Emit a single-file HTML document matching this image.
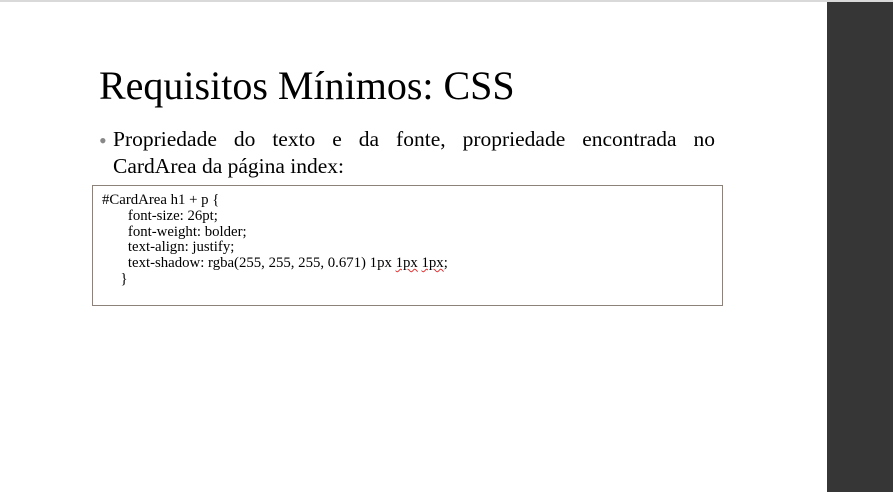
<!DOCTYPE html>
<html><head><meta charset="utf-8"><style>
body{margin:0;width:893px;height:492px;background:#fff;position:relative;overflow:hidden;font-family:"Liberation Serif",serif;color:#000}
.top{position:absolute;left:0;top:0;width:893px;height:2px;background:#d9d9d9}
.side{position:absolute;left:827px;top:2px;width:66px;height:490px;background:#363636}
h1{position:absolute;left:99px;top:62px;margin:0;font-weight:normal;font-size:40px;line-height:48px;white-space:nowrap}
.b{position:absolute;left:99px;top:127px;font-size:22px;color:#888;line-height:27px}
.p{position:absolute;left:113px;top:126px;width:602px;font-size:21.5px;line-height:27px}
.j{text-align:justify;text-align-last:justify;white-space:nowrap}
.code{position:absolute;left:92px;top:185px;width:629px;height:119px;border:1px solid #8c8279;font-size:14.8px;line-height:15.8px}
.ln{white-space:pre}
.u{text-decoration:underline wavy #d33;text-decoration-thickness:1px}
</style></head><body>
<div class="top"></div><div class="side"></div>
<h1>Requisitos Mínimos: CSS</h1>
<div class="b">•</div>
<div class="p"><div class="j" style="white-space:normal">Propriedade do texto e da fonte, propriedade encontrada no</div><div>CardArea da página index:</div></div>
<div class="code"><div style="padding:7px 0 0 9px"><div class="ln">#CardArea h1 + p {</div><div class="ln">       font-size: 26pt;</div><div class="ln">       font-weight: bolder;</div><div class="ln">       text-align: justify;</div><div class="ln">       text-shadow: rgba(255, 255, 255, 0.671) 1px <span class="u">1px</span> <span class="u">1px</span>;</div><div class="ln">     }</div></div></div>
</body></html>
